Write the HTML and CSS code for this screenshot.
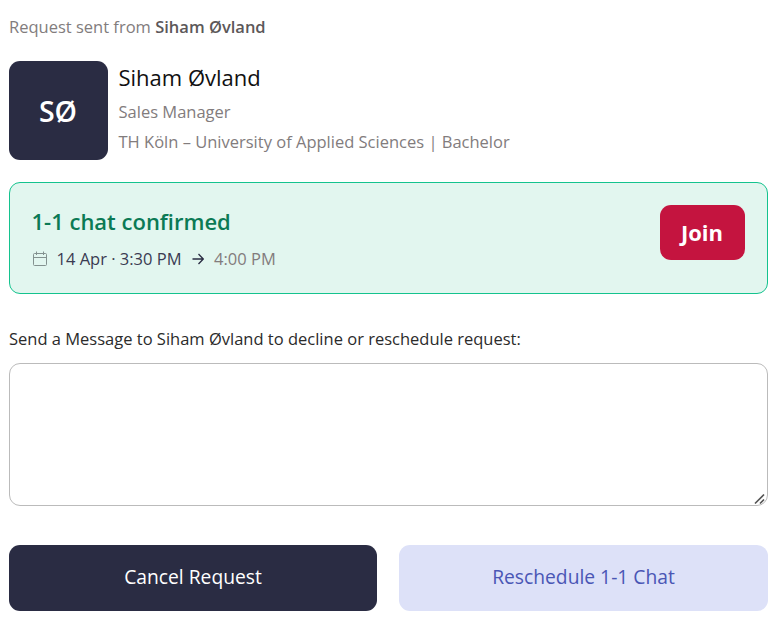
FILE: index.html
```html
<!DOCTYPE html>
<html lang="en">
<head>
    <meta charset="UTF-8">
    <meta name="viewport" content="width=device-width, initial-scale=1.0">
    <title>Chat Request</title>
    <link rel="stylesheet" href="styles.css">
</head>
<body>
    <main>
        <p class="sent-from">Request sent from <strong>Siham Øvland</strong></p>

        <!-- Profile -->
        <section class="profile">
            <div class="avatar">SØ</div>
            <div class="profile-info">
                <h1>Siham Øvland</h1>
                <p>Sales Manager</p>
                <p>TH Köln – University of Applied Sciences | Bachelor</p>
            </div>
        </section>

        <!-- Confirmed chat -->
        <section class="chat-card">
            <div>
                <h2>1-1 chat confirmed</h2>
                <div class="chat-time">
                    <svg class="calendar" width="16" height="16" viewBox="0 0 16 16">
                        <rect x="1.500" y="2.500" width="13" height="12" rx="1"/>
                        <path d="M1.500 6.500h13M4.500 0.500v3.500M11.500 0.500v3.500"/>
                    </svg>
                    <span>14 Apr · 3:30 PM</span>
                    <svg class="arrow" width="12" height="12" viewBox="0 0 12 12">
                        <path d="M0.500 6h10.500M6.500 1L11.300 6l-4.800 5"/>
                    </svg>
                    <span class="end-time">4:00 PM</span>
                </div>
            </div>
            <button class="join-btn">Join</button>
        </section>

        <!-- Message -->
        <form>
            <label for="message">Send a Message to Siham Øvland to decline or reschedule request:</label>
            <div class="message-box">
                <textarea id="message"></textarea>
                <svg class="grip" width="12" height="12" viewBox="0 0 12 12">
                    <path d="M1 10.500L10 1.500M6 10.500L10 6.500"/>
                </svg>
            </div>
            <div class="actions">
                <button type="button" class="btn cancel-btn">Cancel Request</button>
                <button type="button" class="btn reschedule-btn">Reschedule 1-1 Chat</button>
            </div>
        </form>
    </main>
</body>
</html>
```

FILE: styles.css
```css
* {
    box-sizing: border-box;
}
body {
    font-family: "Open Sans", sans-serif;
    margin: 0;
    background: #fff;
    color: #222;
}
main {
    padding: 15px 14px 0 9px;
}
h1, h2, p {
    margin: 0;
}
button {
    font-family: inherit;
    border: none;
    border-radius: 11px;
    cursor: pointer;
}
.sent-from {
    font-size: 16.5px;
    line-height: 24px;
    color: #827c7d;
}
.sent-from strong {
    font-weight: 600;
    color: #5c5859;
}
.profile {
    display: flex;
    gap: 10.5px;
    margin-top: 22px;
}
.avatar {
    display: flex;
    align-items: center;
    justify-content: center;
    width: 99px;
    height: 99px;
    padding-right: 1px;
    border-radius: 11px;
    background: #2a2c43;
    color: #fff;
    font-size: 28.5px;
    font-weight: 650;
}
.profile-info h1 {
    color: #111;
    font-size: 22px;
    font-weight: 400;
    line-height: 32px;
    margin-bottom: 4px;
}
.profile-info p {
    font-size: 16.5px;
    line-height: 30px;
    color: #827c7d;
}
.chat-card {
    display: flex;
    justify-content: space-between;
    align-items: flex-start;
    height: 112px;
    margin-top: 22px;
    padding: 22px 22px 22px 21.5px;
    border: 1px solid #14c38e;
    border-radius: 11px;
    background: #e2f6ef;
}
.chat-card h2 {
    font-size: 22px;
    font-weight: 600;
    line-height: 32px;
    color: #0b7a55;
}
.chat-time {
    display: flex;
    align-items: center;
    margin-top: 10px;
    font-size: 16.5px;
    line-height: 24px;
    color: #3a3b52;
}
.chat-time svg {
    fill: none;
    stroke: #2a2c43;
}
.chat-time .calendar {
    margin-right: 9px;
    stroke: #83918f;
}
.chat-time .arrow {
    margin: 0 10.5px 0 10px;
    stroke-width: 1.3;
}
.end-time {
    color: #827c7d;
}
.join-btn {
    width: 85px;
    height: 55px;
    padding: 0 1px 2px 0;
    background: #c4143f;
    color: #fff;
    font-size: 22px;
    font-weight: 680;
}
label {
    display: block;
    margin-top: 33px;
    font-size: 16.5px;
    line-height: 24px;
    color: #2b2b2b;
}
.message-box {
    position: relative;
    margin-top: 12px;
}
textarea {
    display: block;
    width: 100%;
    height: 143px;
    border: 1px solid #bbb;
    border-radius: 11px;
    font: inherit;
    background: #fff;
    resize: none;
}
/* drag handle in the corner of the textarea */
.grip {
    position: absolute;
    right: 2px;
    bottom: 1px;
    fill: none;
    stroke: #555;
    stroke-width: 1.7;
    pointer-events: none;
}
.actions {
    display: grid;
    grid-template-columns: 368px 369px;
    gap: 22px;
    margin-top: 39px;
}
.btn {
    height: 66px;
    padding: 0 0 4px;
    font-size: 19.25px;
}
.cancel-btn {
    background: #2a2c43;
    color: #fff;
}
.reschedule-btn {
    background: #dde1f8;
    color: #4a56b5;
}
```
